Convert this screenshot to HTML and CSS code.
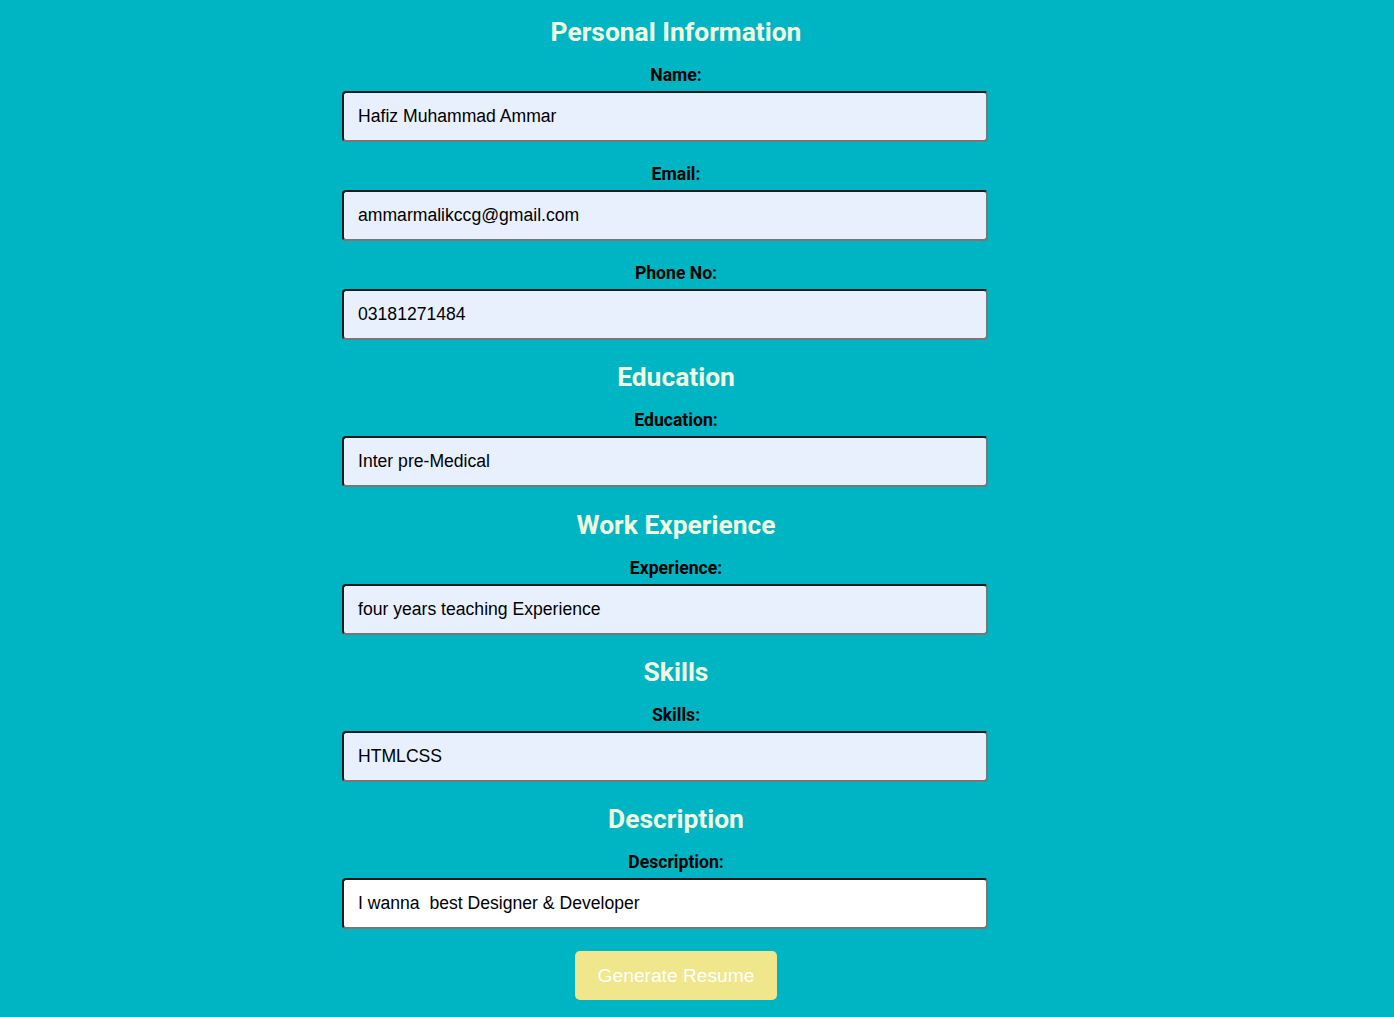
FILE: index.html
```html
<!DOCTYPE html>
<html lang="en">
<head>
<meta charset="utf-8">
<title>Resume Builder</title>
<link rel="stylesheet" href="styles.css">
</head>
<body>
<form class="resume-form">
  <h2 class="section-title">Personal Information</h2>
  <label class="field-label" for="name">Name:</label>
  <input class="field-input autofilled" id="name" type="text" value="Hafiz Muhammad Ammar">
  <label class="field-label" for="email">Email:</label>
  <input class="field-input autofilled" id="email" type="text" value="ammarmalikccg@gmail.com">
  <label class="field-label" for="phone">Phone No:</label>
  <input class="field-input autofilled" id="phone" type="text" value="03181271484">

  <h2 class="section-title">Education</h2>
  <label class="field-label" for="education">Education:</label>
  <input class="field-input autofilled" id="education" type="text" value="Inter pre-Medical">

  <h2 class="section-title section-title-loose">Work Experience</h2>
  <label class="field-label" for="experience">Experience:</label>
  <input class="field-input autofilled" id="experience" type="text" value="four years teaching Experience">

  <h2 class="section-title">Skills</h2>
  <label class="field-label" for="skills">Skills:</label>
  <input class="field-input autofilled" id="skills" type="text" value="HTMLCSS">

  <h2 class="section-title">Description</h2>
  <label class="field-label" for="description">Description:</label>
  <input class="field-input" id="description" type="text" value="I wanna  best Designer &amp; Developer">

  <div class="actions">
    <button class="generate-btn" type="button">Generate Resume</button>
  </div>
</form>
</body>
</html>
```

FILE: styles.css
```css
html, body {
  margin: 0;
  padding: 0;
}

body {
  background: #00b5c3;
  padding: 16px 42px 0 0;
  font-family: Roboto, "Liberation Sans", Arial, sans-serif;
}

.resume-form {
  width: 668px;
  margin: 0 auto;
  display: flex;
  flex-direction: column;
  align-items: stretch;
}

.section-title {
  margin: 1px 0 17px;
  font-size: 26.4px;
  line-height: 30px;
  font-weight: 700;
  color: #f0fbe0;
  text-align: center;
}

.section-title-loose {
  margin-top: 2px;
}

.field-label {
  display: block;
  margin: 0 0 5px;
  padding-top: 1px;
  font-size: 17.6px;
  line-height: 21px;
  font-weight: 700;
  color: #000;
  text-align: center;
}

.field-input {
  display: block;
  box-sizing: border-box;
  width: 646px;
  height: 51px;
  margin: 0 0 21px;
  padding: 0 14px;
  font-family: "Liberation Sans", Arial, sans-serif;
  font-size: 17.6px;
  color: #000;
  background: #fff;
  border-width: 2px;
  border-style: solid;
  border-color: #1c1c1c #767676 #767676 #1c1c1c;
  border-radius: 4px;
  outline: none;
}

.field-input.autofilled {
  background: #e8f0fe;
}

.actions {
  display: flex;
  justify-content: center;
  margin-top: 1px;
}

.generate-btn {
  height: 49px;
  padding: 0 23px;
  font-family: "Liberation Sans", Arial, sans-serif;
  font-size: 19.2px;
  color: #fff;
  background: #f0e68c;
  border: none;
  border-radius: 5px;
}
```
